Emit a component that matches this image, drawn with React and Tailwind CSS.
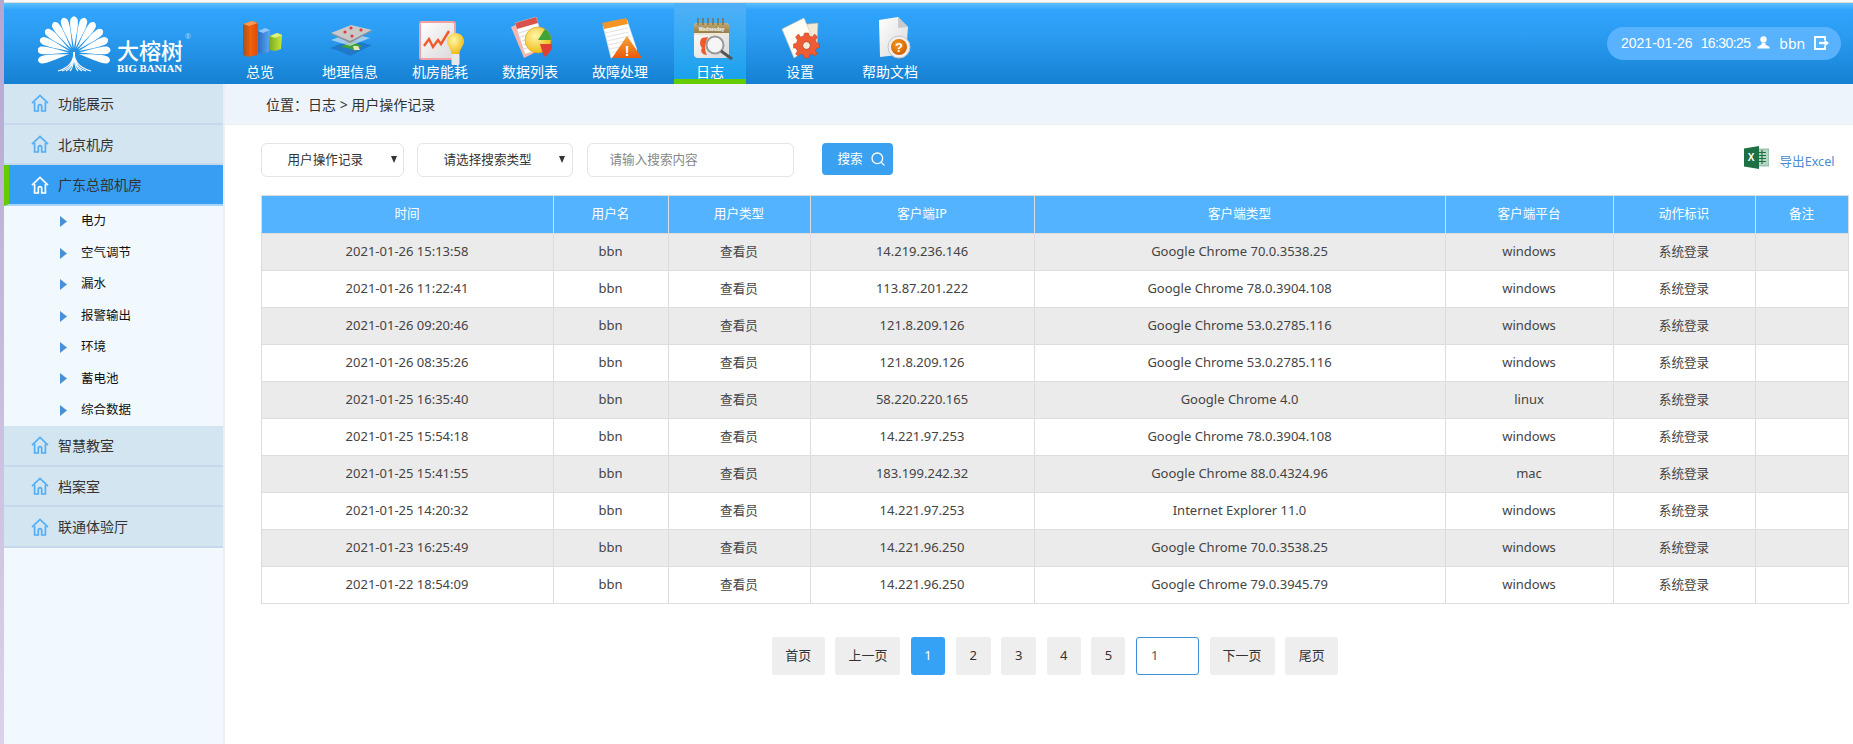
import { Search } from "lucide-react";

const navItems = ["总览", "地理信息", "机房能耗", "数据列表", "故障处理", "日志", "设置", "帮助文档"];

const rows = [
  ["2021-01-26 15:13:58", "14.219.236.146", "Google Chrome 70.0.3538.25", "windows"],
  ["2021-01-26 11:22:41", "113.87.201.222", "Google Chrome 78.0.3904.108", "windows"],
  ["2021-01-26 09:20:46", "121.8.209.126", "Google Chrome 53.0.2785.116", "windows"],
  ["2021-01-26 08:35:26", "121.8.209.126", "Google Chrome 53.0.2785.116", "windows"],
  ["2021-01-25 16:35:40", "58.220.220.165", "Google Chrome 4.0", "linux"],
  ["2021-01-25 15:54:18", "14.221.97.253", "Google Chrome 78.0.3904.108", "windows"],
  ["2021-01-25 15:41:55", "183.199.242.32", "Google Chrome 88.0.4324.96", "mac"],
  ["2021-01-25 14:20:32", "14.221.97.253", "Internet Explorer 11.0", "windows"],
  ["2021-01-23 16:25:49", "14.221.96.250", "Google Chrome 70.0.3538.25", "windows"],
  ["2021-01-22 18:54:09", "14.221.96.250", "Google Chrome 79.0.3945.79", "windows"],
];

const subMenu = ["电力", "空气调节", "漏水", "报警输出", "环境", "蓄电池", "综合数据"];

function HomeIcon({ className }) {
  return (
    <svg viewBox="0 0 18 18" className={className} fill="none" stroke="currentColor" strokeWidth="1.7">
      <path d="M1 9.2 9 1.4l8 7.8" />
      <path d="M3.6 8v9h3.7v-4.6a1.7 1.7 0 0 1 3.4 0V17h3.7V8" />
    </svg>
  );
}

function Logo() {
  const angles = [-102, -85, -68, -51, -34, -17, 0, 17, 34, 51, 68, 85, 102];
  return (
    <svg viewBox="38 14 74 58" className="w-[74px] h-[58px] shrink-0">
      {angles.map((a) => (
        <path
          key={a}
          transform={`translate(74 53) rotate(${a})`}
          d="M0 -5C-1.4 -15-5-27-3.5-34Q0-39.5 3.5-34C5-27 1.4-15 0-5Z"
          fill="#fff"
        />
      ))}
      <g stroke="#fff" fill="none" strokeWidth="1.1">
        <path d="M74 52C74 62 68 68 58 71" />
        <path d="M74 52C74 62 71 68 62 71" />
        <path d="M74 52C74 62 72 68 66 71" />
        <path d="M74 52C74 62 73 68 70 71" />
        <path d="M74 52C74 62 75 68 78 71" />
        <path d="M74 52C74 62 76 68 82 71" />
        <path d="M74 52C74 62 77 68 86 71" />
        <path d="M74 52C74 62 80 68 91 71" />
      </g>
    </svg>
  );
}

function Defs() {
  return (
    <svg className="absolute w-0 h-0">
      <defs>
        <linearGradient id="org" x1="0" x2="1" y1="0" y2="0">
          <stop offset="0" stopColor="#a8501c" />
          <stop offset="0.5" stopColor="#f0620c" />
          <stop offset="1" stopColor="#e04a06" />
        </linearGradient>
        <linearGradient id="blu" x1="0" x2="1" y1="0" y2="0">
          <stop offset="0" stopColor="#2a6fc0" />
          <stop offset="1" stopColor="#5aa8f5" />
        </linearGradient>
        <linearGradient id="grn" x1="0" x2="1" y1="0" y2="0">
          <stop offset="0" stopColor="#7fae20" />
          <stop offset="1" stopColor="#c6e83a" />
        </linearGradient>
        <linearGradient id="sheet" x1="0" x2="1" y1="0" y2="1">
          <stop offset="0" stopColor="#ffffff" />
          <stop offset="1" stopColor="#d9d9d9" />
        </linearGradient>
        <radialGradient id="bulb" cx="0.4" cy="0.35" r="0.7">
          <stop offset="0" stopColor="#fff6a8" />
          <stop offset="1" stopColor="#eeb80e" />
        </radialGradient>
        <radialGradient id="ball" cx="0.4" cy="0.35" r="0.7">
          <stop offset="0" stopColor="#f79a1a" />
          <stop offset="1" stopColor="#cf5c04" />
        </radialGradient>
        <linearGradient id="tri" x1="0" x2="0" y1="0" y2="1">
          <stop offset="0" stopColor="#f9a53a" />
          <stop offset="1" stopColor="#e9590c" />
        </linearGradient>
        <linearGradient id="cal" x1="0" x2="0" y1="0" y2="1">
          <stop offset="0" stopColor="#c2a870" />
          <stop offset="1" stopColor="#8d7749" />
        </linearGradient>
      </defs>
    </svg>
  );
}

// drawn in page coordinates, each viewBox is the slot the nav item takes
function NavIcon({ index }) {
  const box = `${224 + index * 90} 15 72 50`;
  return (
    <svg viewBox={box} className="w-[72px] h-[50px] overflow-visible shrink-0">
      {index === 0 && (
        <g>
          <path d="M243 24 252 21 258 23 257 55 248 57 243 55Z" fill="url(#org)" />
          <path d="M243 24 252 21 258 23 249 26Z" fill="#f39a55" />
          <path d="M258 31 265 28 270 30 269 52 262 54 258 53Z" fill="url(#blu)" />
          <path d="M258 31 265 28 270 30 263 33Z" fill="#8cc6fa" />
          <path d="M270 36 277 33 282 35 281 49 275 51 270 50Z" fill="url(#grn)" />
          <path d="M270 36 277 33 282 35 275 38Z" fill="#e0f080" />
        </g>
      )}
      {index === 1 && (
        <g>
          <path d="M330 48 351 40 372 45 350 56 342 52Z" fill="#1f78c8" />
          <path d="M340 47 352 42 362 46 356 51 348 48Z" fill="#3fa03a" />
          <path d="M353 46 358 46 360 50 354 50Z" fill="#e8e6b8" />
          <path d="M331 40 350 33 370 38 350 46Z" fill="#dbe8f2" opacity="0.65" />
          <path d="M331 33 351 25 372 30 350 41Z" fill="#c9c9c9" />
          <path d="M331 33 350 41 372 30 372 31 350 43 331 34Z" fill="#8e8e8e" />
          <circle cx="351" cy="28" r="1.6" fill="#e23b3b" />
          <circle cx="361" cy="30" r="1.6" fill="#e23b3b" />
          <circle cx="345" cy="32" r="1.6" fill="#e23b3b" />
          <circle cx="352" cy="36" r="1.6" fill="#e23b3b" />
        </g>
      )}
      {index === 2 && (
        <g>
          <rect x="420" y="22" width="35" height="37" rx="2" fill="url(#sheet)" stroke="#f2a0a0" strokeWidth="2" />
          <path d="M424 46 429 39 433 47 438 40 441 44 449 31" fill="none" stroke="#ee5a2c" strokeWidth="2.4" />
          <path d="M455.5 33C450 33 447 37 447 41.5 447 46 451 48 451.5 54H459.5C460 48 464 46 464 41.5 464 37 461 33 455.5 33Z" fill="url(#bulb)" />
          <rect x="451.5" y="54" width="8" height="11" rx="1" fill="#e8e8e8" />
        </g>
      )}
      {index === 3 && (
        <g>
          <path d="M511 27 528 20 540 50 524 58Z" fill="#f6b6ae" />
          <path d="M515 23 536 17 546 48 525 54Z" fill="#fff" stroke="#d0d0d0" strokeWidth="0.6" />
          <path d="M515 23 536 17 538 23 517 29Z" fill="#d9534c" />
          <g stroke="#c9c9c9" strokeWidth="0.7">
            <path d="M519 33 538 27M520 37 540 31M522 41 541 35M523 45 542 39M524 49 540 44" />
          </g>
          <circle cx="538" cy="40" r="13" fill="url(#bulb)" stroke="#e09a10" strokeWidth="0.6" />
          <path d="M538 40 545 29A13 13 0 0 1 551 40Z" fill="#3da53a" />
          <path d="M540 44 552 44A13 13 0 0 1 544 57Z" fill="#dd3f34" />
        </g>
      )}
      {index === 4 && (
        <g>
          <path d="M603 26 627 20 637 50 611 58Z" fill="#fff" stroke="#ddd" strokeWidth="0.6" />
          <path d="M602 23 626 18 628 24 604 29Z" fill="#f59324" />
          <g stroke="#d5d5d5" strokeWidth="0.7">
            <path d="M605 33 628 28M606 37 629 32M607 41 630 36M608 45 630 40M609 49 625 46M610 53 620 51" />
          </g>
          <path d="M627 36 642 58H612Z" fill="url(#tri)" />
          <text x="627" y="56" fill="#fff" fontSize="14" fontWeight="700" textAnchor="middle" fontFamily="Liberation Sans">!</text>
        </g>
      )}
      {index === 5 && (
        <g>
          <rect x="694" y="23" width="35" height="35" rx="4" fill="url(#sheet)" />
          <path d="M694 35V27a4 4 0 0 1 4-4h27a4 4 0 0 1 4 4v8Z" fill="url(#cal)" />
          <rect x="694" y="33" width="35" height="2" fill="#efe7d0" />
          <text x="711.5" y="31" fill="#fff" fontSize="4.6" fontWeight="700" textAnchor="middle" fontFamily="Liberation Sans">Wednesday</text>
          <g stroke="#7c6c48" strokeWidth="1.3">
            <path d="M698 18v7M703 18v7M708 18v7M713 18v7M718 18v7M723 18v7" />
          </g>
          <path d="M702 38C699 41 700 46 702 48 700 51 702 55 707 55 704 50 705 44 708 37Z" fill="#ee5a2c" />
          <circle cx="715" cy="45" r="8.5" fill="#f5f5f5" stroke="#9a9a9a" strokeWidth="2" />
          <path d="M721 51 732 59" stroke="#555" strokeWidth="2.8" />
        </g>
      )}
      {index === 6 && (
        <g>
          <path d="M798 25 818 23 817 48 800 48Z" fill="#f3ebd6" stroke="#b8ad90" strokeWidth="0.6" />
          <path d="M782 29 804 18 815 44 794 58Z" fill="#fffdf5" stroke="#c9c3af" strokeWidth="0.6" />
          <path d="M806 34 810 34 811 37 814 38 816 35 819 38 817 41 818 44 821 45 821 49 818 49 817 52 819 55 816 57 814 55 811 56 810 59 806 59 805 56 802 55 800 57 797 55 799 52 797 49 795 49 795 45 798 44 799 41 797 38 800 35 802 38 805 37Z" transform="translate(-1.5 -1)" fill="#ee5c36" stroke="#c23d1c" strokeWidth="0.5" />
          <circle cx="806.5" cy="45.5" r="4" fill="#f6e9d8" stroke="#b8431f" />
        </g>
      )}
      {index === 7 && (
        <g>
          <path d="M879 20 898 17 908 27 906 54 880 57Z" fill="url(#sheet)" />
          <path d="M898 17 908 27 898 28Z" fill="#c9c9c9" />
          <circle cx="899" cy="47" r="11" fill="#f0f0f0" stroke="#c5c5c5" />
          <circle cx="899" cy="47" r="8" fill="url(#ball)" />
          <text x="899" y="52" fill="#fff" fontSize="13" fontWeight="700" textAnchor="middle" fontFamily="Liberation Sans">?</text>
        </g>
      )}
    </svg>
  );
}

function Header() {
  return (
    <div className="h-[81px] flex bg-[linear-gradient(180deg,#5cc0fb_0px,#30a4fb_7px,#2b9df3_30px,#1680d1_100%)]">
      <div className="w-[220px] shrink-0 flex items-start pl-[34px] pt-[11px]">
        <Logo />
        <div className="ml-[5px] mt-[26px] text-white relative">
          <div className="text-[22px] leading-[20px] whitespace-nowrap font-medium">大榕树</div>
          <div className="[font-family:'Liberation_Serif',serif] text-[10.8px] leading-[11px] mt-[3px] font-bold whitespace-nowrap">BIG BANIAN</div>
          <div className="absolute left-[68px] -top-[8px] text-[7px] text-white/60">®</div>
        </div>
      </div>
      <div className="flex gap-[18px]">
        {navItems.map((n, i) => (
          <div
            key={n}
            className={`w-[72px] h-[81px] flex flex-col items-center pt-[12px] ${
              i === 5 ? "bg-[linear-gradient(180deg,#50b1f8,#17a0ec)]" : ""
            }`}
          >
            <NavIcon index={i} />
            <div className="h-[14px] leading-[14px] text-[14px] text-white whitespace-nowrap">{n}</div>
            {i === 5 && <div className="w-full h-[5px] bg-[#66cc00] mt-auto" />}
          </div>
        ))}
      </div>
      <div className="ml-auto mr-[12px] mt-[24px] h-[33px] w-[234px] rounded-full bg-[#58b2fd] text-white flex items-center pl-[14px] text-[14px] whitespace-nowrap">
        <span className="[font-family:'Liberation_Sans',sans-serif]">2021-01-26</span>
        <span className="ml-[8px] tracking-[-0.6px] [font-family:'Liberation_Sans',sans-serif]">16:30:25</span>
        <svg viewBox="0 0 14 14" className="w-[13px] h-[13px] ml-[7px] mb-[3px]" fill="#fff">
          <circle cx="7" cy="3.8" r="3.4" />
          <path d="M5 7.5h4l.4 2L13.5 11.5V13.5H.5V11.5L4.6 9.5Z" />
        </svg>
        <span className="ml-[9px] text-[14px]">bbn</span>
        <svg viewBox="0 0 15 14" className="w-[15px] h-[14px] ml-[9px] mb-[2px]" fill="none" stroke="#fff" strokeWidth="1.8">
          <path d="M11 4V1H1v12h10v-3" />
          <path d="M5 7h6.5" strokeWidth="2.4" />
          <path d="M10.5 3.5 15 7l-4.5 3.5Z" fill="#fff" stroke="none" />
        </svg>
      </div>
    </div>
  );
}

function SideItem({ label, active }) {
  return (
    <div
      className={`h-[40.7px] shrink-0 flex items-center border-b-2 text-[14px] text-[#333] ${
        active
          ? "bg-[#369ff3] border-l-[5px] border-l-[#66cc00] border-b-[#a9d4f5] pl-[22px]"
          : "bg-[#d3e5f0] border-b-[#c6d8ec] pl-[27px]"
      }`}
    >
      <HomeIcon className={`w-[18px] h-[18px] shrink-0 ${active ? "text-white" : "text-[#52aef5]"}`} />
      <span className="ml-[9px] whitespace-nowrap">{label}</span>
    </div>
  );
}

function Sidebar() {
  return (
    <div className="w-[221px] shrink-0 bg-[#f1f9ff] border-r-2 border-[#eeeeee] flex flex-col">
      <SideItem label="功能展示" />
      <SideItem label="北京机房" />
      <SideItem label="广东总部机房" active />
      {subMenu.map((s) => (
        <div key={s} className="h-[31.43px] shrink-0 flex items-center pl-[56px] text-[12.5px] text-[#111]">
          <svg viewBox="0 0 7 11" className="w-[7px] h-[11px] shrink-0">
            <path d="M0 0 7 5.5 0 11Z" fill="#4a90d9" />
          </svg>
          <span className="ml-[14px]">{s}</span>
        </div>
      ))}
      <SideItem label="智慧教室" />
      <SideItem label="档案室" />
      <SideItem label="联通体验厅" />
    </div>
  );
}

function ExcelIcon() {
  return (
    <svg viewBox="0 0 25 23" className="w-[25px] h-[23px]">
      <rect x="10" y="3" width="15" height="17" fill="#b7d5c4" stroke="#5f9e7f" strokeWidth="0.6" />
      <path d="M14 6.5h8M14 9.5h8M14 12.5h8M14 15.5h8M18 4v14" stroke="#1f7246" strokeWidth="1.2" />
      <path d="M0 2.5 15 0V23L0 20.5Z" fill="#1d7044" />
      <text x="7" y="15" fill="#fff" fontSize="10" fontWeight="700" textAnchor="middle" fontFamily="Liberation Sans">X</text>
    </svg>
  );
}

function SelectArrow() {
  return (
    <svg viewBox="0 0 7 8" className="w-[6px] h-[7px] ml-auto mb-[2px] shrink-0">
      <path d="M0 0H7L3.5 8Z" fill="#333" />
    </svg>
  );
}

function PageBtn({ children, w, active }) {
  return (
    <div
      className={`h-[38px] rounded-[3px] flex items-center justify-center text-[13px] ${w} ${
        active ? "bg-[#36a2f5] text-white" : "bg-[#eeeeee] text-[#333]"
      }`}
    >
      {children}
    </div>
  );
}

function Content() {
  return (
    <div className="flex-1 min-w-0 bg-white flex flex-col">
      <div className="h-[41px] shrink-0 bg-[#edf4fc] border-b border-[#eeeeee] flex items-center pl-[41px] text-[14px] text-[#333]">
        位置：日志 &gt; 用户操作记录
      </div>
      <div className="pl-[35.5px] pr-[5.5px] pt-[18px] flex flex-col text-[13px] text-[#444]">
        <div className="flex items-start h-[34px]">
          <div className="w-[143px] h-[34px] rounded-[6px] border border-[#e5e5e5] flex items-center pl-[26px] pr-[6px] text-[#333] whitespace-nowrap">
            <span className="text-[12.6px]">用户操作记录</span>
            <SelectArrow />
          </div>
          <div className="ml-[13px] w-[156px] h-[34px] rounded-[6px] border border-[#e5e5e5] flex items-center pl-[26px] pr-[7px] text-[#333] whitespace-nowrap">
            <span className="text-[12.6px]">请选择搜索类型</span>
            <SelectArrow />
          </div>
          <div className="ml-[14px] w-[207px] h-[34px] rounded-[6px] border border-[#e5e5e5] flex items-center pl-[22px] text-[12.6px] text-[#888] whitespace-nowrap">
            请输入搜索内容
          </div>
          <div className="ml-[28px] w-[71px] h-[32px] rounded-[4px] bg-[#3aa0f0] flex items-center pl-[16px] text-white whitespace-nowrap">
            <span className="text-[12.6px]">搜索</span>
            <Search className="w-[16px] h-[16px] ml-[7px]" strokeWidth={2} />
          </div>
          <div className="ml-auto mr-[13px] flex items-start h-[34px] mt-[3px]">
            <ExcelIcon />
            <span className="ml-[11px] mt-[7px] text-[12.6px] text-[#4a8bd0] whitespace-nowrap">导出Excel</span>
          </div>
        </div>
        <table className="mt-[18px] w-[1587px] table-fixed border-collapse border border-[#dddddd]">
          <colgroup>
            <col className="w-[292px]" />
            <col className="w-[115px]" />
            <col className="w-[142px]" />
            <col className="w-[224px]" />
            <col className="w-[411px]" />
            <col className="w-[168px]" />
            <col className="w-[142px]" />
            <col className="w-[93px]" />
          </colgroup>
          <thead>
            <tr className="h-[38px] bg-[#53b3ff] text-white">
              {["时间", "用户名", "用户类型", "客户端IP", "客户端类型", "客户端平台", "动作标识", "备注"].map((h) => (
                <th key={h} className="border border-[#dddddd] font-normal text-[12.6px]">
                  {h}
                </th>
              ))}
            </tr>
          </thead>
          <tbody>
            {rows.map((r, i) => (
              <tr key={i} className={`h-[37px] ${i % 2 === 0 ? "bg-[#ebebeb]" : "bg-white"}`}>
                <td className="border border-[#dddddd] text-center">{r[0]}</td>
                <td className="border border-[#dddddd] text-center">bbn</td>
                <td className="border border-[#dddddd] text-center text-[12.6px]">查看员</td>
                <td className="border border-[#dddddd] text-center">{r[1]}</td>
                <td className="border border-[#dddddd] text-center">{r[2]}</td>
                <td className="border border-[#dddddd] text-center">{r[3]}</td>
                <td className="border border-[#dddddd] text-center text-[12.6px]">系统登录</td>
                <td className="border border-[#dddddd]"></td>
              </tr>
            ))}
          </tbody>
        </table>
        <div className="mt-[33px] ml-[2px] flex justify-center gap-[10.6px]">
          <PageBtn w="w-[53px]">首页</PageBtn>
          <PageBtn w="w-[65px]">上一页</PageBtn>
          <PageBtn w="w-[34px]" active>
            1
          </PageBtn>
          <PageBtn w="w-[35px]">2</PageBtn>
          <PageBtn w="w-[35px]">3</PageBtn>
          <PageBtn w="w-[34px]">4</PageBtn>
          <PageBtn w="w-[34px]">5</PageBtn>
          <div className="w-[63px] h-[38px] rounded-[3px] border border-[#3d8fd9] bg-white flex items-center pl-[14px] text-[#555]">1</div>
          <PageBtn w="w-[65px]">下一页</PageBtn>
          <PageBtn w="w-[53px]">尾页</PageBtn>
        </div>
      </div>
    </div>
  );
}

export default function App() {
  return (
    <div className="h-[744px] w-[1853px] overflow-hidden flex bg-white [font-family:'Noto_Sans','Noto_Sans_CJK_SC',sans-serif]">
      <Defs />
      <div className="w-1 shrink-0 bg-[linear-gradient(180deg,#b4a7d2,#dcd2e8)]" />
      <div className="flex-1 min-w-0 flex flex-col">
        <div className="h-[3px] shrink-0 bg-[#fafafa] border-b border-[#dddddd]" />
        <Header />
        <div className="flex-1 min-h-0 flex">
          <Sidebar />
          <Content />
        </div>
      </div>
    </div>
  );
}
